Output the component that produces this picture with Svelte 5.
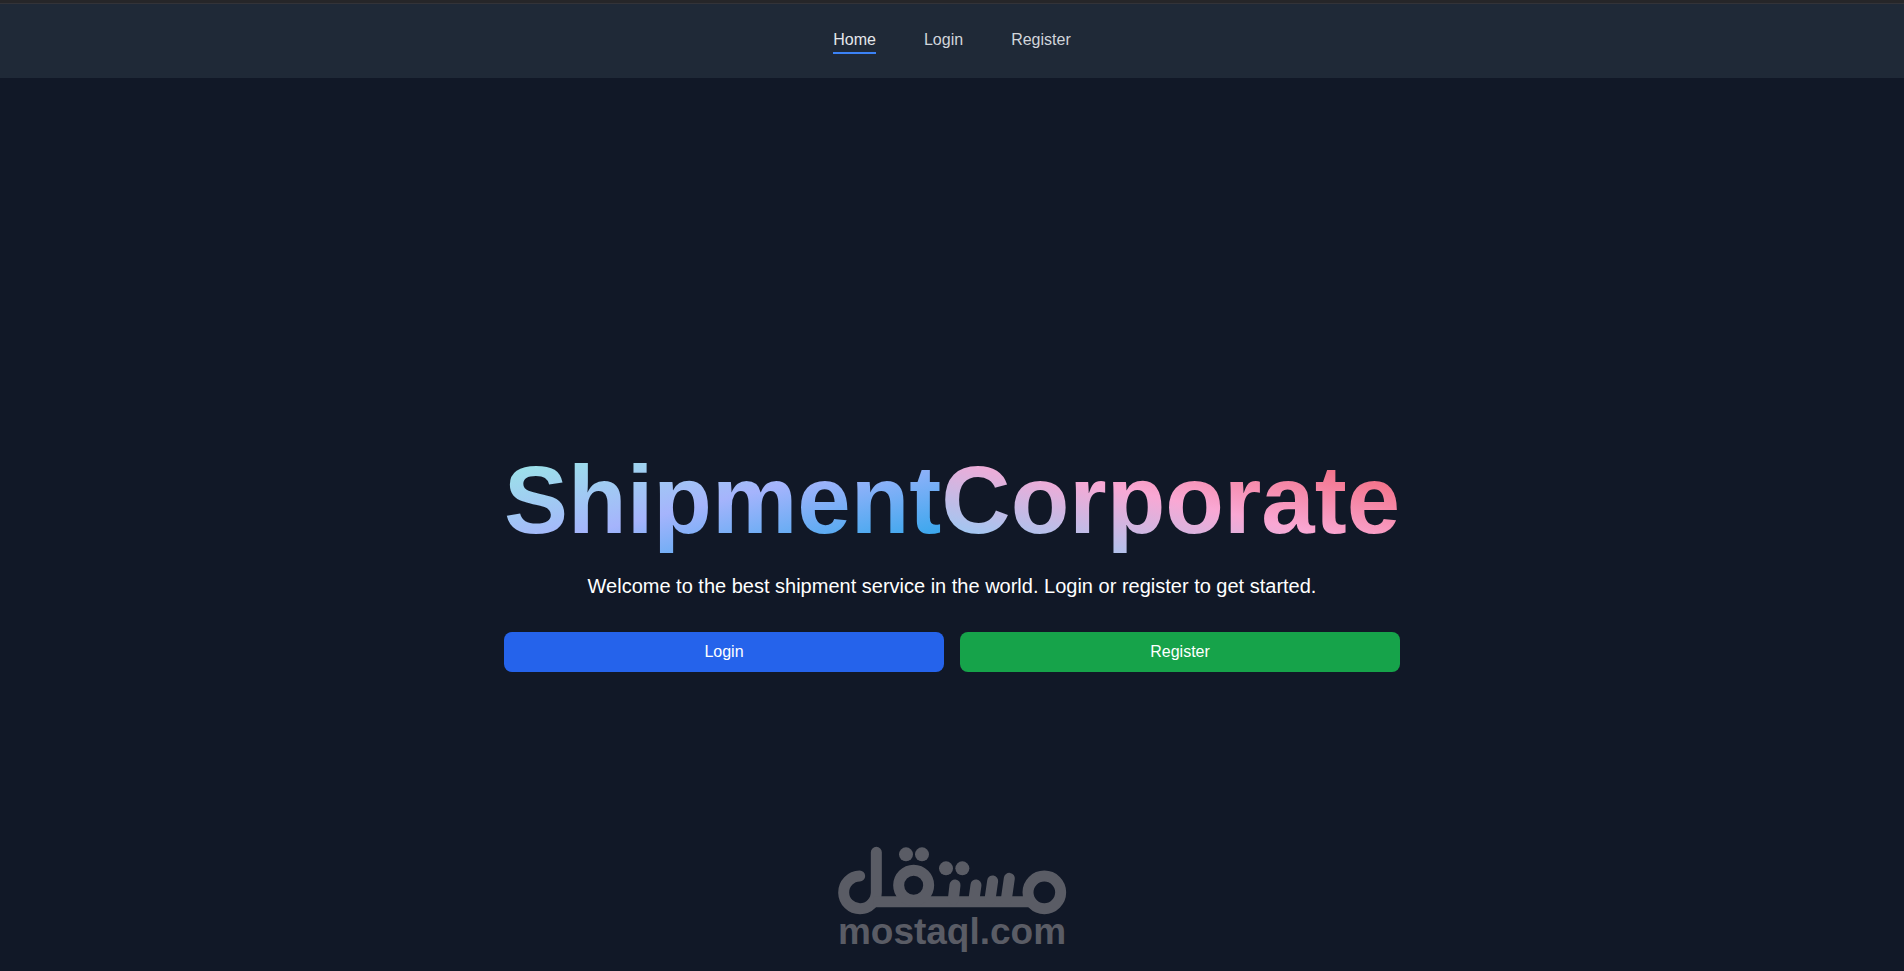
<script>
  let current = 'Home';

  const links = ['Home', 'Login', 'Register'];
</script>

<div class="page">
  <header>
    <nav>
      {#each links as link}
        <a
          href="#{link.toLowerCase()}"
          class:active={current === link}
          on:click={() => (current = link)}
        >
          {link}
        </a>
      {/each}
    </nav>
  </header>

  <main>
    <div class="hero">
      <h1><span class="cool">Shipment</span><span class="warm">Corporate</span></h1>
      <p>Welcome to the best shipment service in the world. Login or register to get started.</p>
      <div class="actions">
        <button class="login" on:click={() => (current = 'Login')}>Login</button>
        <button class="register" on:click={() => (current = 'Register')}>Register</button>
      </div>
    </div>
  </main>

  <svg class="watermark" viewBox="48 45 696 330" role="img" aria-label="mostaql.com">
    <g fill="none" stroke="currentColor" stroke-width="33" stroke-linecap="round">
      <path d="M119 138A49 49 0 1 0 169 187V67" />
      <path d="M160 215H636" stroke-linecap="butt" />
      <circle cx="281" cy="166" r="45" />
      <path d="M405 165L400 208M468 165L462 208M518 153L510 208M568 145L559 208" />
      <circle cx="673" cy="187" r="49" />
    </g>
    <g fill="currentColor">
      <circle cx="258" cy="73" r="21" />
      <circle cx="306" cy="73" r="21" />
      <circle cx="378" cy="115" r="21" />
      <circle cx="427" cy="115" r="21" />
      <text x="396" y="342" text-anchor="middle">mostaql.com</text>
    </g>
  </svg>
</div>

<style>
  :global(body) {
    background: #111827;
  }

  .page {
    position: relative;
    height: 100vh;
    overflow: hidden;
    box-sizing: border-box;
    border-top: 3px solid #262629;
    background: #111827;
    color: #fff;
    font-family: 'Liberation Sans', Arial, sans-serif;
    font-size: 16px;
    line-height: 24px;
  }

  header {
    padding: 24px;
    border-top: 1px solid #333338;
    background: #1f2937;
  }

  nav {
    display: flex;
    justify-content: center;
    gap: 48px;
  }

  nav a {
    border-bottom: 2px solid transparent;
    color: #d1d5db;
    text-decoration: none;
  }

  nav a.active {
    border-bottom-color: #3b82f6;
    color: #e5e7eb;
  }

  main {
    display: flex;
    align-items: center;
    justify-content: center;
    min-height: calc(100vh - 4px);
  }

  .hero {
    display: flex;
    flex-direction: column;
    text-align: center;
  }

  h1 {
    margin: 0 0 24px;
    font-size: 96px;
    font-weight: 700;
    line-height: 96px;
  }

  h1 span {
    background-clip: text;
    -webkit-background-clip: text;
    color: transparent;
  }

  .cool {
    background-image: linear-gradient(to bottom right, #99eee4, #a5b4fc, #22a4ea);
  }

  .warm {
    background-image: linear-gradient(to top right, #86d0fa, #f9a8d4, #ef5560);
  }

  p {
    margin: 0 0 32px;
    font-size: 20px;
    line-height: 28px;
  }

  .actions {
    display: grid;
    grid-template-columns: 1fr 1fr;
    gap: 16px;
  }

  button {
    padding: 8px 16px;
    border: none;
    border-radius: 8px;
    color: #fff;
    font: inherit;
    cursor: pointer;
  }

  .login {
    background: #2563eb;
  }

  .register {
    background: #16a34a;
  }

  .watermark {
    position: absolute;
    bottom: 16px;
    left: 50%;
    width: 232px;
    height: 110px;
    transform: translateX(-50%);
    color: #5a5c65;
    pointer-events: none;
  }

  .watermark text {
    font-size: 111px;
    font-weight: 700;
  }
</style>
